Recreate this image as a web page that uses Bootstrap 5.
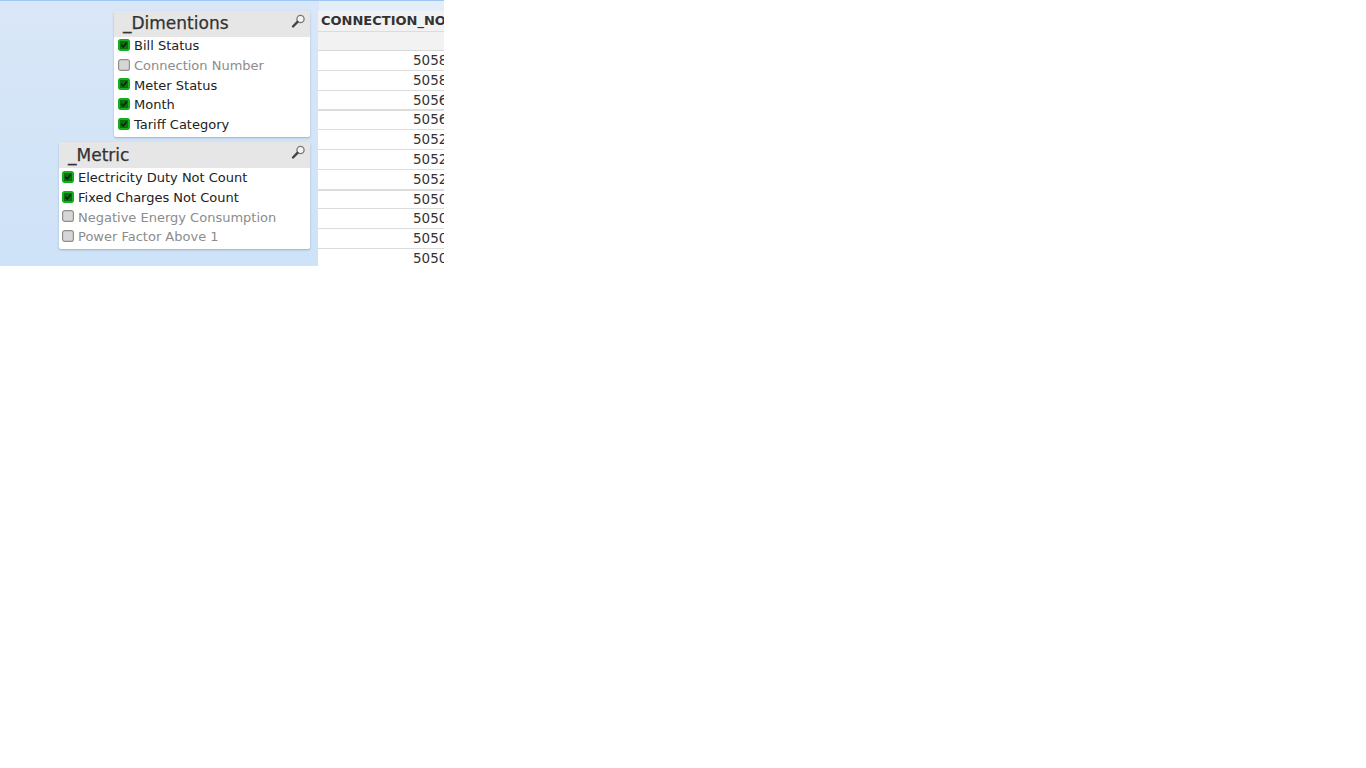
<!DOCTYPE html>
<html lang="en">
<head>
<meta charset="utf-8">
<title>Sheet</title>
<link href="https://cdn.jsdelivr.net/npm/bootstrap@5.3.0/dist/css/bootstrap.min.css" rel="stylesheet">
<style>
html,body{background:#fff;margin:0}
body{font-family:"DejaVu Sans",sans-serif;color:#222}
.sheet{position:relative;width:444px;height:266px;overflow:hidden;background:linear-gradient(180deg,#d9e7f7 0,#cee2f8 100%);border-top:1px solid #9cc8f8;box-sizing:border-box}
.gutter{position:absolute;left:319px;top:0;height:10px;right:0;background:#e4eef9}
.lb{position:absolute;background:#fff;border-radius:2px;box-shadow:0 1px 2px rgba(90,110,130,.45);overflow:hidden}
.lb-dim{left:114px;top:10px;width:196px;height:126px}
.lb-met{left:59px;top:141px;width:251px;height:107px}
.lb-head{height:26px;background:#e6e6e6;padding-left:9px;font-size:17px;line-height:25px;color:#333;-webkit-text-stroke:.25px #333}
.lb-dim .lb-head{margin-bottom:-1px}
.lb-met .lb-head{line-height:27px}
.lb-head svg{margin-right:4px;margin-top:3px}
.lb-row{height:19.7px;line-height:19px;font-size:13px;color:#222;padding-left:3px;gap:4px;white-space:nowrap}
.lb-dim .lb-row{padding-left:4px}
.lb-row.off{color:#8c8c8c}
.chk{width:12px;height:12px;flex:none;border-radius:2px;margin-top:-2px}
.tbl{position:absolute;left:318px;top:10px;width:126px;height:256px;background:#fff;overflow:hidden}
.t-head{height:20px;background:#f2f2f2;font-weight:700;font-size:13px;line-height:19px;padding-left:3px;color:#333;white-space:nowrap}
.t-sub{height:20px;background:#f2f2f2;border-top:1px solid #dcdcdc;border-bottom:1px solid #d8d8d8}
.t-row{height:19.8px;border-bottom:1px solid #dcdcdc;font-size:13.5px;line-height:18.6px;color:#333;white-space:nowrap;padding-left:95px}
.t-row.thick{box-shadow:0 1px 0 #dcdcdc;position:relative}
</style>
</head>
<body>
<div class="sheet">
  <div class="gutter"></div>

  <div class="lb lb-dim">
    <div class="lb-head d-flex justify-content-between align-items-start"><span>_Dimentions</span>
      <svg width="15" height="15" viewBox="0 0 15 15"><circle cx="9.5" cy="5" r="3.6" fill="#f4f4f4" stroke="#777" stroke-width="1.3"/><path d="M6.5 7.8 2 12.5" stroke="#444" stroke-width="2.4" stroke-linecap="round"/></svg></div>
    <div class="lb-row d-flex align-items-center"><svg class="chk" viewBox="0 0 12 12"><rect width="12" height="12" rx="2" fill="#12b01c"/><rect x="2" y="2" width="8" height="8" fill="#0b6f10"/><path d="M3.2 5.8 5.2 8 8.8 3.6" fill="none" stroke="#06280a" stroke-width="1.6"/></svg><span>Bill Status</span></div>
    <div class="lb-row off d-flex align-items-center"><svg class="chk" viewBox="0 0 12 12"><rect x=".6" y=".6" width="10.8" height="10.8" rx="2" fill="#d6d6d6" stroke="#8f8f8f" stroke-width="1.2"/></svg><span>Connection Number</span></div>
    <div class="lb-row d-flex align-items-center"><svg class="chk" viewBox="0 0 12 12"><rect width="12" height="12" rx="2" fill="#12b01c"/><rect x="2" y="2" width="8" height="8" fill="#0b6f10"/><path d="M3.2 5.8 5.2 8 8.8 3.6" fill="none" stroke="#06280a" stroke-width="1.6"/></svg><span>Meter Status</span></div>
    <div class="lb-row d-flex align-items-center"><svg class="chk" viewBox="0 0 12 12"><rect width="12" height="12" rx="2" fill="#12b01c"/><rect x="2" y="2" width="8" height="8" fill="#0b6f10"/><path d="M3.2 5.8 5.2 8 8.8 3.6" fill="none" stroke="#06280a" stroke-width="1.6"/></svg><span>Month</span></div>
    <div class="lb-row d-flex align-items-center"><svg class="chk" viewBox="0 0 12 12"><rect width="12" height="12" rx="2" fill="#12b01c"/><rect x="2" y="2" width="8" height="8" fill="#0b6f10"/><path d="M3.2 5.8 5.2 8 8.8 3.6" fill="none" stroke="#06280a" stroke-width="1.6"/></svg><span>Tariff Category</span></div>
  </div>

  <div class="lb lb-met">
    <div class="lb-head d-flex justify-content-between align-items-start"><span>_Metric</span>
      <svg width="15" height="15" viewBox="0 0 15 15"><circle cx="9.5" cy="5" r="3.6" fill="#f4f4f4" stroke="#777" stroke-width="1.3"/><path d="M6.5 7.8 2 12.5" stroke="#444" stroke-width="2.4" stroke-linecap="round"/></svg></div>
    <div class="lb-row d-flex align-items-center"><svg class="chk" viewBox="0 0 12 12"><rect width="12" height="12" rx="2" fill="#12b01c"/><rect x="2" y="2" width="8" height="8" fill="#0b6f10"/><path d="M3.2 5.8 5.2 8 8.8 3.6" fill="none" stroke="#06280a" stroke-width="1.6"/></svg><span>Electricity Duty Not Count</span></div>
    <div class="lb-row d-flex align-items-center"><svg class="chk" viewBox="0 0 12 12"><rect width="12" height="12" rx="2" fill="#12b01c"/><rect x="2" y="2" width="8" height="8" fill="#0b6f10"/><path d="M3.2 5.8 5.2 8 8.8 3.6" fill="none" stroke="#06280a" stroke-width="1.6"/></svg><span>Fixed Charges Not Count</span></div>
    <div class="lb-row off d-flex align-items-center"><svg class="chk" viewBox="0 0 12 12"><rect x=".6" y=".6" width="10.8" height="10.8" rx="2" fill="#d6d6d6" stroke="#8f8f8f" stroke-width="1.2"/></svg><span>Negative Energy Consumption</span></div>
    <div class="lb-row off d-flex align-items-center"><svg class="chk" viewBox="0 0 12 12"><rect x=".6" y=".6" width="10.8" height="10.8" rx="2" fill="#d6d6d6" stroke="#8f8f8f" stroke-width="1.2"/></svg><span>Power Factor Above 1</span></div>
  </div>

  <div class="tbl">
    <div class="t-head">CONNECTION_NO</div>
    <div class="t-sub"></div>
    <div class="t-row">5058</div>
    <div class="t-row">5058</div>
    <div class="t-row thick">5056</div>
    <div class="t-row">5056</div>
    <div class="t-row">5052</div>
    <div class="t-row">5052</div>
    <div class="t-row thick">5052</div>
    <div class="t-row">5050</div>
    <div class="t-row">5050</div>
    <div class="t-row">5050</div>
    <div class="t-row">5050</div>
  </div>
</div>
</body>
</html>
